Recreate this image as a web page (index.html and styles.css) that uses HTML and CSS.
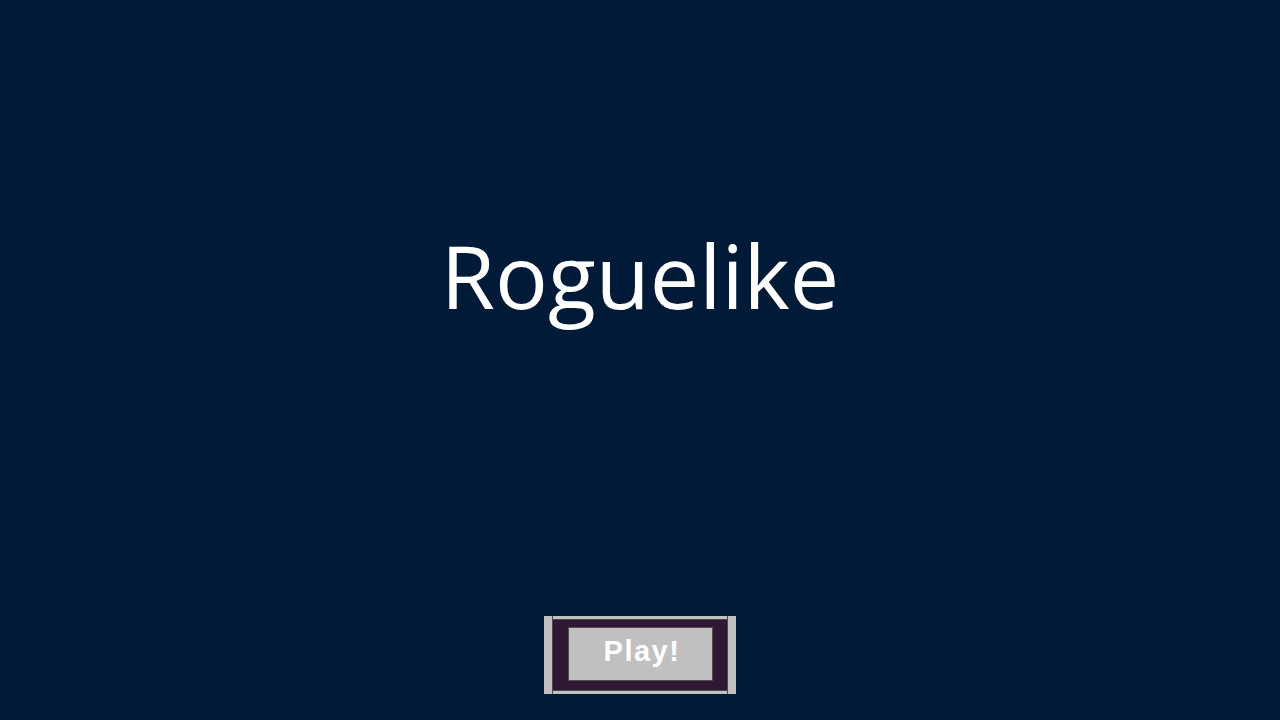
FILE: index.html
```html
<!DOCTYPE html>
<html>
<head>
<meta charset="utf-8">
<link rel="stylesheet" href="styles.css">
</head>
<body>
<main class="screen">
  <h1 class="title">Roguelike</h1>
  <div class="play-frame">
    <div class="play-column">
      <div class="play-inner">
        <button class="play-btn">Play!</button>
      </div>
    </div>
  </div>
</main>
</body>
</html>
```
FILE: styles.css
```css
html, body {
  margin: 0;
  padding: 0;
  background: #001a38;
}
.screen {
  width: 1280px;
  height: 720px;
  display: flex;
  flex-direction: column;
  align-items: center;
  box-sizing: border-box;
  padding-top: 220px;
}
.title {
  margin: 0;
  font-family: "Open Sans", sans-serif;
  font-weight: 400;
  font-size: 88px;
  line-height: 110px;
  color: #ffffff;
}
.play-frame {
  margin-top: 286px;
  width: 192px;
  height: 78px;
  box-sizing: border-box;
  background: #c0c0c0;
  padding: 0 8px;
  display: flex;
}
.play-column {
  flex: 1;
  display: flex;
  border-left: 1px solid #4a4a4a;
  border-right: 1px solid #4a4a4a;
  padding: 3px 0;
}
.play-inner {
  flex: 1;
  background: #2e1833;
  border-top: 1px solid #4a4a4a;
  border-bottom: 1px solid #4a4a4a;
  display: flex;
  justify-content: center;
  padding-top: 7px;
}
.play-btn {
  width: 145px;
  height: 54px;
  box-sizing: border-box;
  background: #c0c0c0;
  border: 1px solid #4f4f4f;
  color: #ffffff;
  font-family: "Liberation Sans", Arial, sans-serif;
  font-weight: 700;
  font-size: 29px;
  letter-spacing: 1.5px;
  line-height: 46px;
  padding: 0 0 6px 4px;
}
```
